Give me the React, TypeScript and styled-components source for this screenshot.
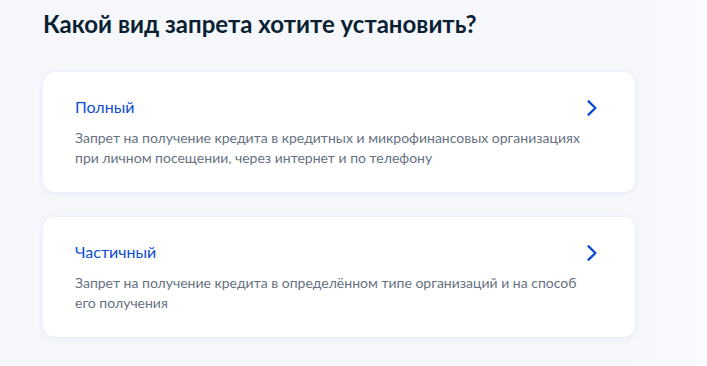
import React from "react";
import styled, { createGlobalStyle } from "styled-components";

interface Option {
  id: number;
  title: string;
  description: string;
}

const options: Option[] = [
  {
    id: 1,
    title: "Полный",
    description:
      "Запрет на получение кредита в кредитных и микрофинансовых организациях при личном посещении, через интернет и по телефону",
  },
  {
    id: 2,
    title: "Частичный",
    description:
      "Запрет на получение кредита в определённом типе организаций и на способ его получения",
  },
];

const GlobalStyle = createGlobalStyle`
  html, body {
    margin: 0;
    padding: 0;
    background: #f5f7fb;
  }
  body {
    font-family: Lato, "Noto Sans", sans-serif;
    color: #0b1f33;
  }
`;

const Page = styled.main`
  min-height: 366px;
  padding: 10px 72px 0 43px;
  box-sizing: border-box;
  background: linear-gradient(90deg, #f5f7fb 0%, #f5f7fb 88%, #f9fbfe 100%);
`;

const Heading = styled.h1`
  margin: 0 0 34px 0;
  font-size: 24px;
  line-height: 28px;
  font-weight: 700;
  color: #0b1f33;
`;

const List = styled.div`
  display: flex;
  flex-direction: column;
  gap: 25px;
`;

const Card = styled.button`
  display: block;
  width: 100%;
  padding: 23px 38px 24px 32px;
  box-sizing: border-box;
  border: none;
  border-radius: 12px;
  background: #ffffff;
  box-shadow: 0 1px 6px rgba(198, 212, 240, 0.35);
  text-align: left;
  font-family: inherit;
  cursor: pointer;
`;

const Header = styled.div`
  display: flex;
  align-items: center;
  justify-content: space-between;
  margin-bottom: 9px;
`;

const Title = styled.div`
  font-size: 16px;
  line-height: 24px;
  color: #0d4cd3;
`;

const Description = styled.p`
  margin: 0;
  font-size: 14px;
  line-height: 20px;
  color: #66727f;
`;

const Chevron = styled.svg`
  flex-shrink: 0;
  width: 10px;
  height: 16px;
  margin-top: 2px;
`;

const ArrowIcon = () => (
  <Chevron viewBox="0 0 10 16" fill="none">
    <path d="M1.6 1.3 L8.4 8 L1.6 14.7" stroke="#0d4cd3" strokeWidth="2.4" strokeLinecap="round" strokeLinejoin="round" />
  </Chevron>
);

const App: React.FC = () => {
  return (
    <Page>
      <GlobalStyle />
      <Heading>Какой вид запрета хотите установить?</Heading>
      <List>
        {options.map((o) => (
          <Card key={o.id}>
            <Header>
              <Title>{o.title}</Title>
              <ArrowIcon />
            </Header>
            <Description>{o.description}</Description>
          </Card>
        ))}
      </List>
    </Page>
  );
};

export default App;
